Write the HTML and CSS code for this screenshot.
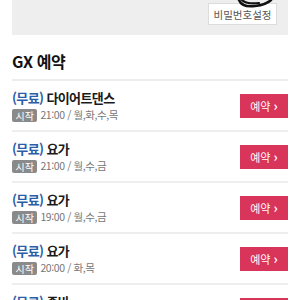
FILE: index.html
```html
<!DOCTYPE html>
<html lang="ko">
<head>
<meta charset="utf-8">
<link rel="stylesheet" href="styles.css">
</head>
<body>
<div class="top-panel">
  <svg class="scribble" width="36" height="9" viewBox="0 0 36 9">
    <path d="M2 0 C4 5 10 7 18 6 C26 5 31 3 34 0" fill="none" stroke="#111" stroke-width="2.6" stroke-linecap="round"/>
    <path d="M5 0 C8 3 14 4 22 3" fill="none" stroke="#111" stroke-width="2.2" stroke-linecap="round"/>
  </svg>
  <button class="pw-btn">비밀번호설정</button>
</div>
<h2 class="section-title">GX 예약</h2>
<ul class="list">
  <li class="row">
    <div class="info">
      <div class="title"><span class="free">(무료)</span> 다이어트댄스</div>
      <div class="meta"><span class="badge">시작</span> 21:00 / 월,화,수,목</div>
    </div>
    <button class="book">예약 <span class="chev">›</span></button>
  </li>
  <li class="row">
    <div class="info">
      <div class="title"><span class="free">(무료)</span> 요가</div>
      <div class="meta"><span class="badge">시작</span> 21:00 / 월,수,금</div>
    </div>
    <button class="book">예약 <span class="chev">›</span></button>
  </li>
  <li class="row">
    <div class="info">
      <div class="title"><span class="free">(무료)</span> 요가</div>
      <div class="meta"><span class="badge">시작</span> 19:00 / 월,수,금</div>
    </div>
    <button class="book">예약 <span class="chev">›</span></button>
  </li>
  <li class="row">
    <div class="info">
      <div class="title"><span class="free">(무료)</span> 요가</div>
      <div class="meta"><span class="badge">시작</span> 20:00 / 화,목</div>
    </div>
    <button class="book">예약 <span class="chev">›</span></button>
  </li>
  <li class="row">
    <div class="info">
      <div class="title"><span class="free">(무료)</span> 줌바</div>
      <div class="meta"><span class="badge">시작</span> 20:00 / 화,목</div>
    </div>
    <button class="book">예약 <span class="chev">›</span></button>
  </li>
</ul>
</body>
</html>
```
FILE: styles.css
```css
html, body {
  margin: 0;
  padding: 0;
  background: #fff;
  font-family: "Noto Sans CJK KR", "Noto Sans", sans-serif;
  color: #111;
}
.top-panel {
  position: relative;
  margin: 0 12px;
  height: 35px;
  background: #eeeeee;
  display: flex;
  justify-content: flex-end;
  align-items: flex-start;
  padding-right: 11px;
}
.scribble {
  position: absolute;
  top: 0;
  left: 225px;
}
.pw-btn {
  margin-top: 3px;
  width: 69px;
  height: 22px;
  padding: 0;
  background: #fff;
  border: 1px solid #dcdcdc;
  font-family: inherit;
  font-size: 10.5px;
  color: #555;
}
.section-title {
  margin: 0 12px;
  padding: 16px 0 8px;
  font-size: 16px;
  line-height: 20px;
  font-weight: 700;
  letter-spacing: -0.4px;
  border-bottom: 2px solid #eeeeee;
}
.list {
  list-style: none;
  margin: 0 12px;
  padding: 0;
}
.row {
  display: flex;
  justify-content: space-between;
  align-items: center;
  height: 49px;
  border-bottom: 2px solid #eeeeee;
}
.info {
  display: flex;
  flex-direction: column;
  gap: 2px;
}
.title {
  font-size: 13px;
  line-height: 17px;
  font-weight: 700;
  letter-spacing: -0.6px;
  color: #1a1a1a;
}
.free {
  color: #2b5ea8;
}
.meta {
  font-size: 10.5px;
  line-height: 14px;
  letter-spacing: -0.4px;
  color: #777;
  display: flex;
  align-items: center;
  gap: 3px;
}
.badge {
  display: inline-block;
  background: #8a8a8a;
  color: #fff;
  font-size: 10px;
  line-height: 13px;
  letter-spacing: 0;
  padding: 0 3.5px;
  border-radius: 2px;
}
.book {
  width: 48px;
  height: 24px;
  padding: 0;
  border: none;
  background: #d9345a;
  color: #fff;
  font-family: inherit;
  font-size: 11px;
  line-height: 24px;
}
.chev {
  font-weight: 700;
  font-size: 13px;
}
```
